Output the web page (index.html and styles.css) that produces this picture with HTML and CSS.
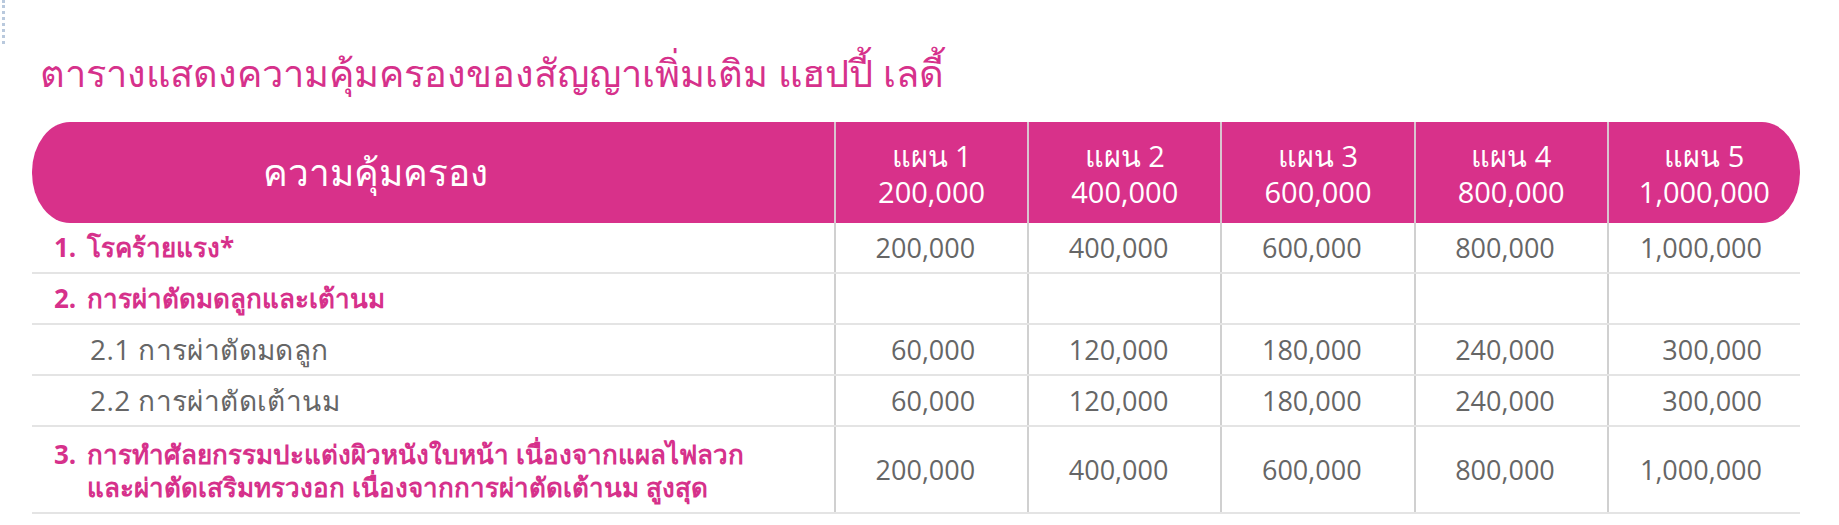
FILE: index.html
```html
<!DOCTYPE html>
<html lang="th">
<head>
<meta charset="utf-8">
<title>ตารางแสดงความคุ้มครอง</title>
<link rel="stylesheet" href="styles.css">
</head>
<body>
<div class="page">
  <div class="edge-mark"></div>
  <h1 class="title">ตารางแสดงความคุ้มครองของสัญญาเพิ่มเติม แฮปปี้ เลดี้</h1>
  <div class="table">
    <div class="head">
      <div class="hmain">ความคุ้มครอง</div>
      <div class="hplan"><span>แผน 1</span><span>200,000</span></div>
      <div class="hplan"><span>แผน 2</span><span>400,000</span></div>
      <div class="hplan"><span>แผน 3</span><span>600,000</span></div>
      <div class="hplan"><span>แผน 4</span><span>800,000</span></div>
      <div class="hplan"><span>แผน 5</span><span>1,000,000</span></div>
    </div>
    <div class="row">
      <div class="label main"><span class="no">1.</span><span class="txt">โรคร้ายแรง*</span></div>
      <div class="num">200,000</div>
      <div class="num">400,000</div>
      <div class="num">600,000</div>
      <div class="num">800,000</div>
      <div class="num">1,000,000</div>
    </div>
    <div class="row">
      <div class="label main"><span class="no">2.</span><span class="txt">การผ่าตัดมดลูกและเต้านม</span></div>
      <div class="num"></div>
      <div class="num"></div>
      <div class="num"></div>
      <div class="num"></div>
      <div class="num"></div>
    </div>
    <div class="row">
      <div class="label sub">2.1 การผ่าตัดมดลูก</div>
      <div class="num">60,000</div>
      <div class="num">120,000</div>
      <div class="num">180,000</div>
      <div class="num">240,000</div>
      <div class="num">300,000</div>
    </div>
    <div class="row">
      <div class="label sub">2.2 การผ่าตัดเต้านม</div>
      <div class="num">60,000</div>
      <div class="num">120,000</div>
      <div class="num">180,000</div>
      <div class="num">240,000</div>
      <div class="num">300,000</div>
    </div>
    <div class="row tall">
      <div class="label main"><span class="no">3.</span><span class="txt">การทำศัลยกรรมปะแต่งผิวหนังใบหน้า เนื่องจากแผลไฟลวก<br>และผ่าตัดเสริมทรวงอก เนื่องจากการผ่าตัดเต้านม สูงสุด</span></div>
      <div class="num">200,000</div>
      <div class="num">400,000</div>
      <div class="num">600,000</div>
      <div class="num">800,000</div>
      <div class="num">1,000,000</div>
    </div>
  </div>
</div>
</body>
</html>
```

FILE: styles.css
```css
* { box-sizing: border-box; }
html, body { margin: 0; padding: 0; background: #ffffff; }
body {
  font-family: "Open Sans", "Noto Sans", "DejaVu Sans", sans-serif;
  color: #666666;
}
.page {
  position: relative;
  width: 1839px;
  height: 525px;
  overflow: hidden;
  padding-top: 44px;
}
.edge-mark {
  position: absolute;
  left: 0;
  top: 0;
  width: 5px;
  height: 44px;
  border-right: 3px dotted #b9c9dd;
}
.title {
  margin: 0 0 0 40px;
  height: 78px;
  font-size: 38px;
  font-weight: 400;
  line-height: 56px;
  color: #d6318b;
  white-space: nowrap;
}
.table {
  width: 1768px;
  margin-left: 32px;
}
.head, .row {
  display: grid;
  grid-template-columns: 802px repeat(5, 1fr);
}
.head {
  height: 101px;
  background: #d8318a;
  border-radius: 38px / 50px;
  color: #ffffff;
}
.hmain {
  display: flex;
  align-items: center;
  justify-content: center;
  padding-right: 115px;
  font-size: 37px;
}
.hplan {
  display: flex;
  flex-direction: column;
  align-items: center;
  justify-content: center;
  border-left: 2px solid #d9c4cf;
  font-size: 29px;
  line-height: 36px;
  padding-top: 2px;
}
.row {
  height: 51px;
  border-bottom: 2px solid #e4e4e4;
}
.row.tall { height: 87px; }
.label {
  display: flex;
  align-items: center;
  font-size: 26px;
}
.label.main {
  padding-left: 22px;
  color: #d6318b;
  font-weight: 700;
  align-items: flex-start;
  padding-top: 8px;
  line-height: 33px;
}
.label.main .no { width: 33px; flex: none; }
.row.tall .label.main { padding-top: 11px; }
.label.sub {
  padding-left: 58px;
  color: #666666;
  font-size: 28px;
  letter-spacing: 0.4px;
}
.num {
  display: flex;
  align-items: center;
  justify-content: flex-end;
  padding-right: 52px;
  border-left: 2px solid #d0d0d0;
  font-size: 27px;
  font-stretch: 94%;
  color: #666666;
}
.num:last-child { padding-right: 38px; }
```
